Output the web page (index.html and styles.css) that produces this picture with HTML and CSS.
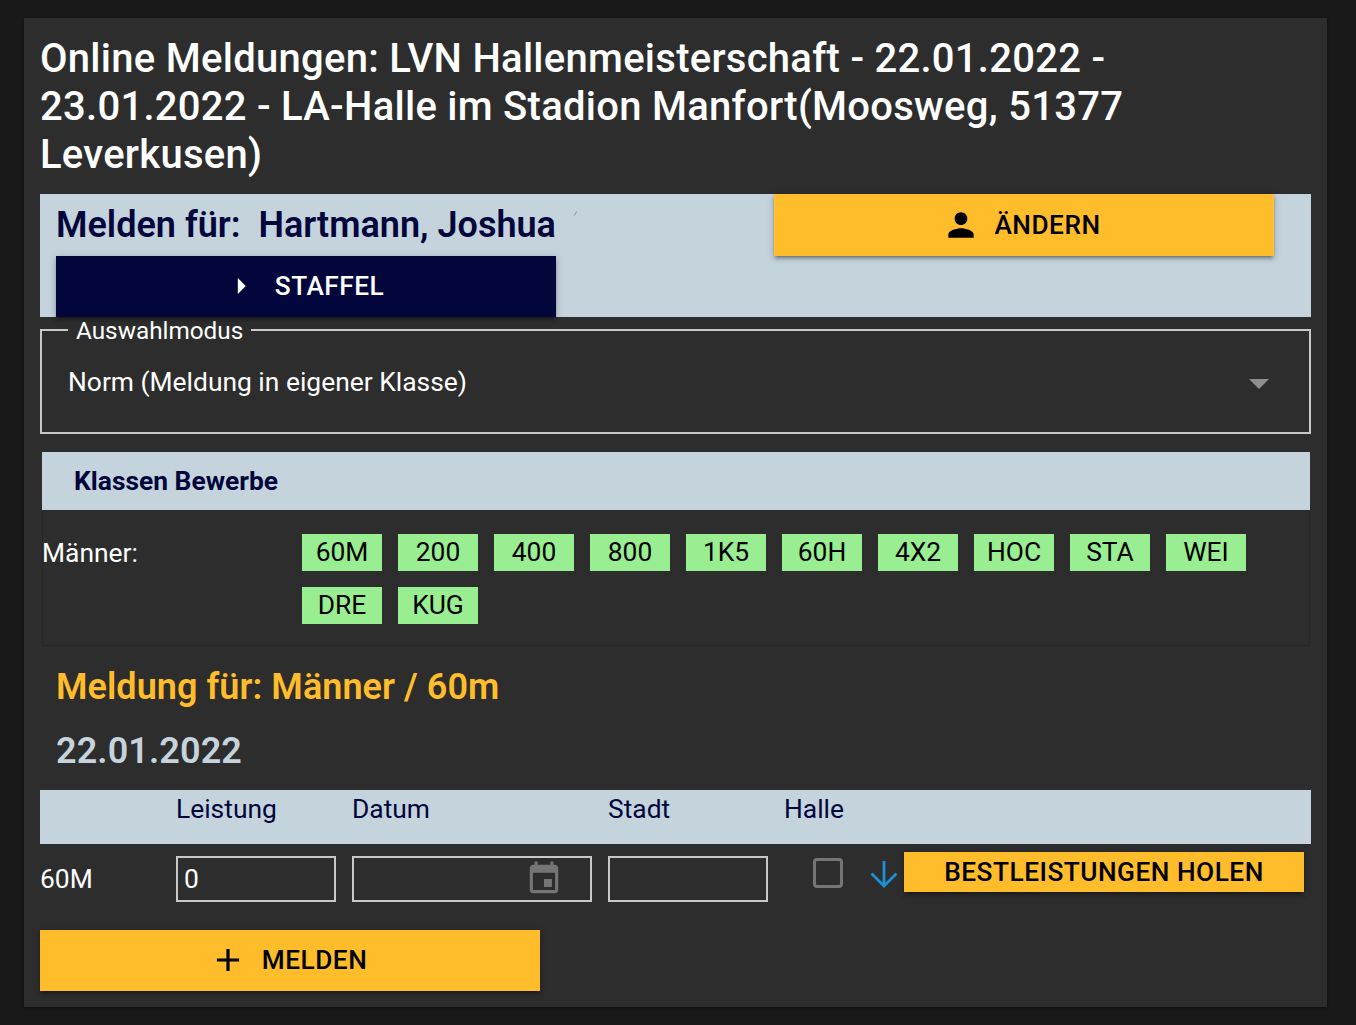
FILE: index.html
```html
<!DOCTYPE html>
<html lang="de">
<head>
<meta charset="utf-8">
<title>Online Meldungen</title>
<link rel="stylesheet" href="styles.css">
</head>
<body>
<main class="card">
  <h1 class="title">Online Meldungen: LVN Hallenmeisterschaft - 22.01.2022 - 23.01.2022 - LA-Halle im Stadion Manfort(Moosweg, 51377 Leverkusen)</h1>

  <section class="athlete">
    <div class="athlete-left">
      <h2 class="athlete-name">Melden für:&nbsp; Hartmann, Joshua</h2>
      <button class="btn btn-navy" type="button">
        <svg width="38" height="38" viewBox="0 0 24 24"><path d="M10 7l5 5-5 5z" fill="#fff"/></svg>
        <span>STAFFEL</span>
      </button>
    </div>
    <span class="speck"></span>
    <button class="btn btn-amber btn-change" type="button">
      <svg width="38" height="38" viewBox="0 0 24 24"><path d="M12 12c2.21 0 4-1.79 4-4s-1.79-4-4-4-4 1.79-4 4 1.79 4 4 4zm0 2c-2.67 0-8 1.34-8 4v2h16v-2c0-2.66-5.33-4-8-4z" fill="#000"/></svg>
      <span>ÄNDERN</span>
    </button>
  </section>

  <fieldset class="mode">
    <legend class="mode-legend">Auswahlmodus</legend>
    <div class="mode-row">
      <span>Norm (Meldung in eigener Klasse)</span>
      <span class="mode-arrow"></span>
    </div>
  </fieldset>

  <section class="classes">
    <h3 class="classes-head">Klassen Bewerbe</h3>
    <div class="classes-body">
      <div class="classes-label">Männer:</div>
      <div class="chips">
        <span class="chip">60M</span><span class="chip">200</span><span class="chip">400</span><span class="chip">800</span><span class="chip">1K5</span><span class="chip">60H</span><span class="chip">4X2</span><span class="chip">HOC</span><span class="chip">STA</span><span class="chip">WEI</span><span class="chip">DRE</span><span class="chip">KUG</span>
      </div>
    </div>
  </section>

  <h2 class="event">Meldung für: Männer / 60m</h2>
  <h2 class="date">22.01.2022</h2>

  <div class="grid grid-head">
    <span></span><span>Leistung</span><span>Datum</span><span>Stadt</span><span>Halle</span>
  </div>
  <div class="grid grid-row">
    <span class="row-label">60M</span>
    <div class="field">0</div>
    <div class="field field-date">
      <svg width="38" height="38" viewBox="0 0 24 24"><path d="M17 12h-5v5h5v-5zM16 1v2H8V1H6v2H5c-1.11 0-1.99.9-1.99 2L3 19c0 1.1.89 2 2 2h14c1.1 0 2-.9 2-2V5c0-1.1-.9-2-2-2h-1V1h-2zm3 18H5V8h14v11z" fill="#757575"/></svg>
    </div>
    <div class="field"></div>
    <div class="row-actions">
      <span class="check"></span>
      <svg class="ico-down" width="28" height="28" viewBox="0 0 28 28"><path d="M14 1v25M1.5 13.5L14 26l12.5-12.5" fill="none" stroke="#1e8fd5" stroke-width="2.8"/></svg>
      <button class="btn btn-amber btn-best" type="button">BESTLEISTUNGEN HOLEN</button>
    </div>
  </div>

  <button class="btn btn-amber btn-submit" type="button">
    <svg width="38" height="38" viewBox="0 0 24 24"><path d="M19 13h-6v6h-2v-6H5v-2h6V5h2v6h6v2z" fill="#000"/></svg>
    <span>MELDEN</span>
  </button>
</main>
</body>
</html>
```
FILE: styles.css
```css
* { box-sizing: border-box; }
html, body { margin: 0; height: 100%; }
body {
  background: #191919;
  padding: 18px 29px 18px 24px;
  font-family: Roboto, "Liberation Sans", sans-serif;
  font-size: 26.4px;
  color: #fff;
  overflow: hidden;
}
.card {
  background: #2d2d2d;
  height: 989px;
  padding: 16px;
  box-shadow: 0 1px 3px rgba(0, 0, 0, .4);
}
.title {
  margin: 0;
  padding-top: 1px;
  font-size: 40px;
  line-height: 48px;
  font-weight: 500;
  letter-spacing: .27px;
  height: 160px;
}
.athlete {
  position: relative;
  display: flex;
  justify-content: space-between;
  align-items: flex-start;
  height: 123px;
  background: #c5d3dd;
  padding: 0 37px 0 16px;
}
.athlete-left { width: 500px; }
.athlete-name {
  margin: 0;
  height: 62px;
  font-size: 36px;
  line-height: 62px;
  font-weight: 600;
  color: #02063a;
  white-space: nowrap;
}
.speck {
  position: absolute;
  left: 535px;
  top: 17px;
  width: 1px;
  height: 5px;
  background: #8b99a3;
  transform: rotate(35deg);
}
.btn {
  display: flex;
  align-items: center;
  justify-content: center;
  border: 0;
  border-radius: 0;
  padding: 0;
  font-family: inherit;
  font-size: 26.25px;
  font-weight: 500;
  letter-spacing: .5px;
  box-shadow: 0 3px 3px -2px rgba(0, 0, 0, .3), 0 3px 4px rgba(0, 0, 0, .2), 0 1px 8px rgba(0, 0, 0, .15);
}
.btn-navy {
  width: 500px;
  height: 61px;
  gap: 15px;
  padding: 0 6px 2px 0;
  background: #02063a;
  color: #fff;
}
.btn-amber { background: #ffbc2b; color: #000; }
.btn-change { width: 500px; height: 62px; gap: 14px; padding-right: 5px; }
.mode {
  margin: 12px 0 0;
  height: 105px;
  padding: 0 26px;
  border: 2px solid #c8c8c8;
}
.mode-legend {
  padding: 0 8px;
  font-size: 24.3px;
  line-height: 4px;
  height: 2px;
  color: #fff;
}
.mode-row {
  display: flex;
  justify-content: space-between;
  align-items: center;
  height: 101px;
  padding: 0 14px 0 0;
}
.mode-arrow {
  width: 0;
  height: 0;
  margin-top: 4px;
  border-left: 10px solid transparent;
  border-right: 10px solid transparent;
  border-top: 10px solid #8f8f8f;
}
.classes {
  margin: 18px 1px 0 2px;
  height: 194px;
  border: 1px solid #262626;
  border-top: 0;
}
.classes-head {
  margin: 0 -1px;
  height: 58px;
  padding-left: 32px;
  background: #c5d3dd;
  color: #02063a;
  font-size: 26.4px;
  line-height: 58px;
  font-weight: 700;
}
.classes-body { display: flex; padding-top: 24px; }
.classes-label { width: 260px; line-height: 38px; margin-left: -1px; }
.chips {
  display: flex;
  flex-wrap: wrap;
  gap: 16px;
  width: 970px;
}
.chip {
  width: 80px;
  height: 37px;
  background: #98ee90;
  color: #000;
  text-align: center;
  line-height: 37px;
}
.event, .date {
  margin: 0;
  font-size: 36px;
  font-weight: 600;
  letter-spacing: .05px;
  padding-left: 16px;
}
.event { color: #ffbc2b; line-height: 42px; margin-top: 20px; }
.date { color: #c5d3dd; line-height: 42px; margin-top: 22px; letter-spacing: .1px; }
.grid {
  display: grid;
  grid-template-columns: 136px 176px 256px 176px 1fr;
}
.grid-head {
  margin-top: 18px;
  height: 54px;
  background: #c5d3dd;
  color: #02063a;
  line-height: 38px;
}
.grid-row {
  height: 86px;
}
.row-label { line-height: 70px; }
.field {
  margin-top: 12px;
  height: 46px;
  width: 160px;
  border: 2px solid #c8c8c8;
  line-height: 43px;
  padding-left: 6px;
}
.field-date {
  width: 240px;
  display: flex;
  justify-content: flex-end;
  align-items: center;
  padding-right: 27px;
}
.row-actions {
  display: flex;
  align-items: flex-start;
  padding: 8px 0 0 29px;
}
.check {
  flex: none;
  width: 30px;
  height: 30px;
  margin-top: 6px;
  border: 3px solid #757575;
  border-radius: 4px;
}
.ico-down { flex: none; margin: 8px 6px 0 27px; }
.btn-best { flex: none; width: 400px; height: 40px; }
.btn-submit { width: 500px; height: 61px; gap: 15px; padding: 0 4px 2px 0; }
```
